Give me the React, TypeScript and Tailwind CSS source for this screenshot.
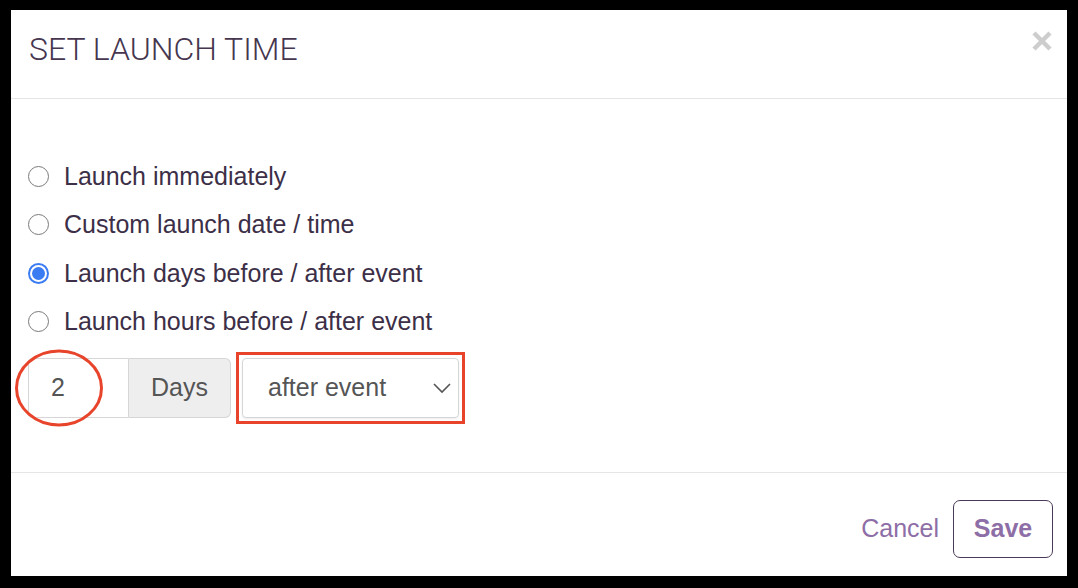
import { useState } from "react";

const options = [
  "Launch immediately",
  "Custom launch date / time",
  "Launch days before / after event",
  "Launch hours before / after event",
];

function Radio({ checked }: { checked: boolean }) {
  if (checked) {
    return (
      <span className="flex h-[21px] w-[21px] items-center justify-center rounded-full bg-[#3b7cf2]">
        <span className="flex h-[17px] w-[17px] items-center justify-center rounded-full bg-white">
          <span className="h-[13px] w-[13px] rounded-full bg-[#3b7cf2]" />
        </span>
      </span>
    );
  }
  return <span className="block h-[21px] w-[21px] rounded-full border-[1.5px] border-[#7a7a7a] bg-white" />;
}

export default function App() {
  const [selected, setSelected] = useState(2);

  return (
    <div className="h-[588px] w-[1078px] overflow-hidden bg-black pl-[11px] pt-[10px] font-['Liberation_Sans',Arial,sans-serif]">
      <div className="flex h-[566px] w-[1056px] flex-col bg-white">
        {/* header */}
        <div className="flex h-[89px] items-start justify-between border-b border-[#e5e5e5] pl-[18px] pr-[13px]">
          <h1 className="pt-[23px] font-['Roboto',sans-serif] text-[32px] font-light leading-none text-[#46364f]">
            SET LAUNCH TIME
          </h1>
          <svg width="24" height="24" viewBox="0 0 24 24" className="mt-[19px]">
            <path d="M4 4 L20 20 M20 4 L4 20" stroke="#cdcdcd" strokeWidth="4.5" strokeLinecap="butt" />
          </svg>
        </div>

        {/* body */}
        <div className="flex h-[374px] flex-col border-b border-[#e5e5e5] pl-[17px] pt-[53px]">
          {options.map((label, i) => (
            <label
              key={label}
              onClick={() => setSelected(i)}
              className="flex h-[48.5px] cursor-pointer items-center gap-[15px] text-[25px] text-[#3c2f47]"
            >
              <Radio checked={selected === i} />
              <span>{label}</span>
            </label>
          ))}

          <div className="mt-[6px] flex items-center">
            <div className="relative flex h-[60px]">
              <div className="flex w-[101px] items-center rounded-l-[4px] border border-[#d6d6d6] pl-[22px] text-[25px] text-[#555]">
                2
              </div>
              <div className="flex w-[102px] items-center justify-center rounded-r-[6px] border border-l-0 border-[#d6d6d6] bg-[#eeeeee] text-[25px] text-[#555]">
                Days
              </div>
              <svg
                className="pointer-events-none absolute left-[-14px] top-[-9px]"
                width="90"
                height="78"
                viewBox="0 0 90 78"
              >
                <ellipse cx="45" cy="39" rx="42.5" ry="37" fill="none" stroke="#e8442b" strokeWidth="3" />
              </svg>
            </div>

            <div className="ml-[5px] border-[3px] border-[#e8442b] p-[3px]">
              <div className="flex h-[60px] w-[217px] items-center justify-between rounded-[4px] border border-[#d6d6d6] pl-[25px] pr-[6px] text-[25px] text-[#555] shadow-[0_1px_2px_rgba(0,0,0,0.08)]">
                <span>after event</span>
                <svg width="20" height="12" viewBox="0 0 20 12">
                  <path d="M2 2 L10 10 L18 2" fill="none" stroke="#555" strokeWidth="1.6" />
                </svg>
              </div>
            </div>
          </div>
        </div>

        {/* footer */}
        <div className="flex flex-1 items-start justify-end gap-[14px] pr-[14px] pt-[27px]">
          <button className="h-[58px] text-[25px] text-[#8d6ea6]">Cancel</button>
          <button className="h-[58px] w-[100px] rounded-[7px] border border-[#4a3a56] text-[25px] font-bold text-[#8d6ea6]">
            Save
          </button>
        </div>
      </div>
    </div>
  );
}
